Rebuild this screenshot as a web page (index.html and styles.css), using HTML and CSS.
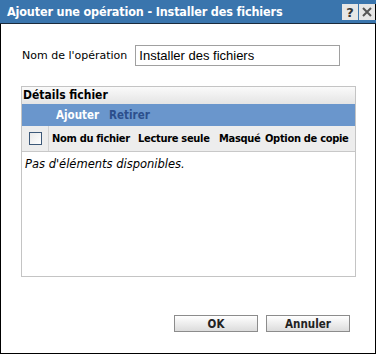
FILE: index.html
```html
<!DOCTYPE html>
<html lang="fr">
<head>
    <meta charset="UTF-8">
    <title>Ajouter une opération - Installer des fichiers</title>
    <link rel="stylesheet" href="styles.css">
</head>
<body>
    <div class="dialog">
        <div class="titlebar">
            <span class="title">Ajouter une opération - Installer des fichiers</span>
            <div class="title-btns">
                <span class="tbtn">?</span>
                <span class="tbtn">
                    <svg width="12" height="12" viewBox="0 0 12 12"><path d="M2 2 L10 10 M10 2 L2 10" stroke="#555" stroke-width="2"/></svg>
                </span>
            </div>
        </div>
        <div class="content">
            <div class="field-row">
                <label for="opName">Nom de l'opération</label>
                <input type="text" id="opName" value="Installer des fichiers">
            </div>
            <div class="panel">
                <div class="panel-head">Détails fichier</div>
                <div class="toolbar">
                    <span class="tool">Ajouter</span>
                    <span class="tool disabled">Retirer</span>
                </div>
                <div class="grid-head">
                    <div class="check-cell"><span class="checkbox"></span></div>
                    <div class="col col-name">Nom du fichier</div>
                    <div class="col col-read">Lecture seule</div>
                    <div class="col col-hidden">Masqué</div>
                    <div class="col">Option de copie</div>
                </div>
                <div class="empty">Pas d'éléments disponibles.</div>
            </div>
            <div class="actions">
                <button class="btn">OK</button>
                <button class="btn">Annuler</button>
            </div>
        </div>
    </div>
</body>
</html>
```

FILE: styles.css
```css
body {
    margin: 0;
    background: #fff;
    font-family: "DejaVu Sans", Verdana, sans-serif;
    color: #000;
}
.dialog {
    width: 376px;
    height: 354px;
    box-sizing: border-box;
    border: 1px solid #000;
    border-top: none;
    display: flex;
    flex-direction: column;
}
.titlebar {
    height: 23px;
    margin: 0 -1px;
    background: #3a75ad;
    border-bottom: 1px solid #1b2a3a;
    display: flex;
    align-items: center;
    justify-content: space-between;
    padding-left: 7px;
}
.title {
    color: #fff;
    font-family: "DejaVu Sans Condensed", "DejaVu Sans", sans-serif;
    font-weight: bold;
    font-size: 12.5px;
    letter-spacing: -0.15px;
}
.title-btns {
    display: flex;
    gap: 1px;
    align-self: flex-start;
    margin-top: 4px;
    border-right: 1px solid #000;
}
.tbtn {
    width: 16px;
    height: 16px;
    background: #e6e6e6;
    display: flex;
    align-items: center;
    justify-content: center;
    font-weight: bold;
    font-size: 13px;
    color: #333;
}
.content {
    flex: 1;
    padding: 21px 20px 0 20px;
    display: flex;
    flex-direction: column;
}
.field-row {
    display: flex;
    align-items: center;
    gap: 8px;
    padding-left: 1px;
}
.field-row label {
    font-size: 11px;
    font-family: "DejaVu Sans", sans-serif;
}
.field-row input {
    width: 205px;
    height: 21px;
    box-sizing: border-box;
    border: 1px solid #a0a0a0;
    padding: 0 3px;
    font-family: "Liberation Sans", Arial, sans-serif;
    font-size: 13px;
    color: #000;
}
.panel {
    margin-top: 20px;
    width: 335px;
    height: 191px;
    box-sizing: border-box;
    border: 1px solid #c4c4c4;
}
.panel-head {
    height: 17px;
    background: linear-gradient(#fafafa, #e4e4e4);
    font-size: 12px;
    font-weight: bold;
    font-family: "DejaVu Sans Condensed", sans-serif;
    padding-left: 1px;
    line-height: 17px;
}
.toolbar {
    height: 22px;
    background: #6a96cc;
    display: flex;
    align-items: center;
    gap: 10px;
    padding-left: 34px;
}
.tool {
    color: #fff;
    font-weight: bold;
    font-size: 11.5px;
    font-family: "DejaVu Sans Condensed", sans-serif;
}
.tool.disabled {
    color: #2c4f8c;
}
.grid-head {
    height: 25px;
    background: #ededed;
    border-bottom: 1px solid #c8c8c8;
    display: flex;
    align-items: center;
    font-size: 11px;
    font-weight: bold;
    font-family: "DejaVu Sans Condensed", sans-serif;
    letter-spacing: -0.3px;
}
.check-cell {
    width: 26px;
    height: 100%;
    border-right: 1px solid #d2d2d2;
    display: flex;
    align-items: center;
    justify-content: center;
}
.checkbox {
    width: 11px;
    height: 11px;
    border: 1px solid #3c5878;
    background: linear-gradient(135deg, #e8e8e8, #fff);
}
.col {
    padding-left: 3px;
    white-space: nowrap;
    box-sizing: border-box;
}
.col-name {
    width: 86px;
}
.col-read {
    width: 81px;
}
.col-hidden {
    width: 46px;
}
.empty {
    font-style: italic;
    font-size: 11.5px;
    padding: 5px 3px;
}
.actions {
    margin-top: 38px;
    display: flex;
    justify-content: flex-end;
    gap: 8px;
    padding-right: 5px;
}
.btn {
    width: 84px;
    height: 17px;
    padding: 0;
    border: 1px solid #8c8c8c;
    background: linear-gradient(#ffffff, #dcdcdc);
    font-family: "DejaVu Sans Condensed", sans-serif;
    font-weight: bold;
    font-size: 11.5px;
    color: #222;
}
```
